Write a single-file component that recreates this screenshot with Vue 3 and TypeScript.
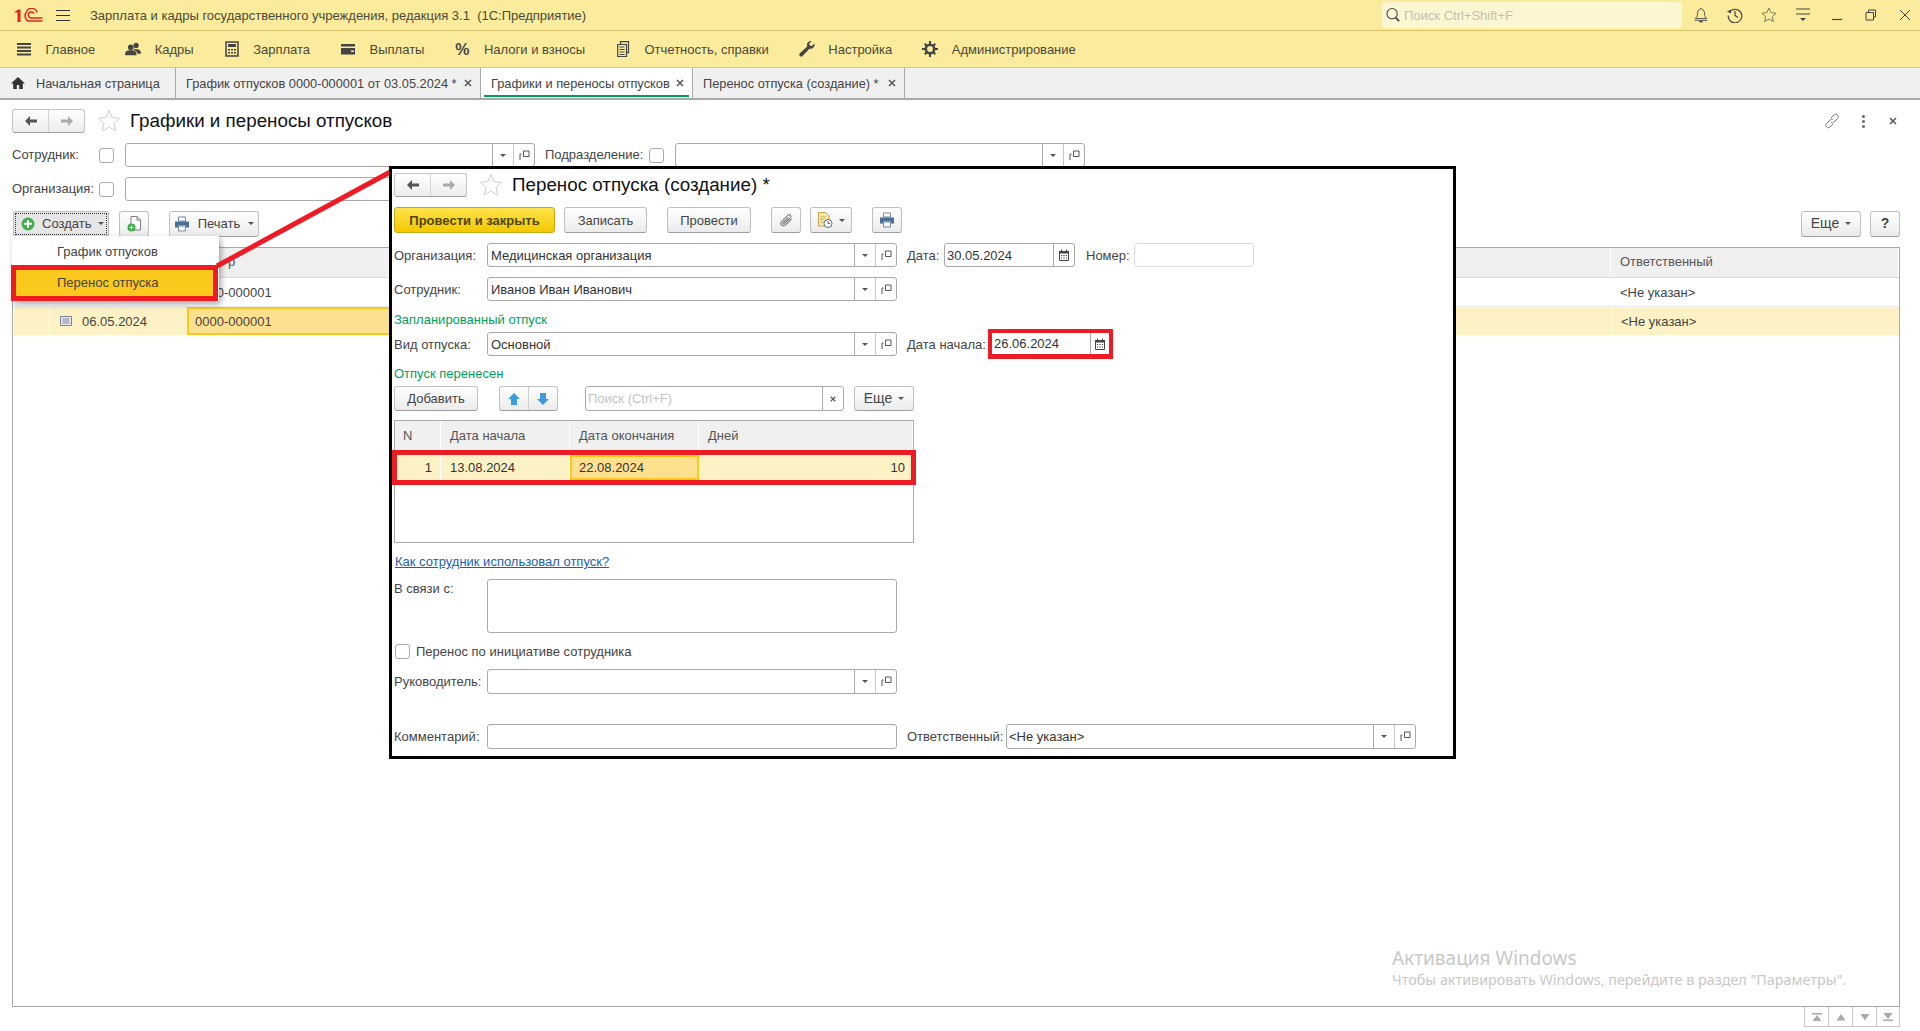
<script setup lang="ts">
// 1C form: "Графики и переносы отпусков" with the pasted "Перенос отпуска" callout on top
const menu = [
  { icon: 'i-list', label: 'Главное' },
  { icon: 'i-users', label: 'Кадры' },
  { icon: 'i-calc', label: 'Зарплата' },
  { icon: 'i-wallet', label: 'Выплаты' },
  { icon: '', label: 'Налоги и взносы' },
  { icon: 'i-docs', label: 'Отчетность, справки' },
  { icon: 'i-wrench', label: 'Настройка' },
  { icon: 'i-gear', label: 'Администрирование' },
]

const tabs = [
  { label: 'График отпусков 0000-000001 от 03.05.2024 *', width: 305 },
  { label: 'Графики и переносы отпусков', width: 212, active: true },
  { label: 'Перенос отпуска (создание) *', width: 212 },
]

const pager = ['i-first', 'i-up', 'i-down', 'i-last']
</script>

<template>
  <div class="app">
    <svg class="sprite" aria-hidden="true">
      <symbol id="i-list" viewBox="0 0 16 16"><path d="M1 2h14v2H1zM1 5.500h14v2H1zM1 9h14v2H1zM1 12.500h14v2H1z" fill="#454545" /></symbol>
      <symbol id="i-users" viewBox="0 0 18 16"><circle cx="6.500" cy="6" r="3.200" fill="#454545" /><circle cx="12.500" cy="4" r="2.900" fill="#454545" /><path d="M0 15c0-4 2-5.500 6.500-5.500S13 11 13 15zM10 7.500c1 .8 2 .8 3 .8 3 0 5 1.200 5 5h-4c-.5-2-1.500-3.500-4-4.300z" fill="#454545" /></symbol>
      <symbol id="i-calc" viewBox="0 0 14 16"><path d="M1 1h12v14H1z" fill="none" stroke="#454545" stroke-width="1.500" /><path d="M3 3h8v3H3zM3 8h2v1.500H3zM6 8h2v1.500H6zM9 8h2v1.500H9zM3 11h2v1.500H3zM6 11h2v1.500H6zM9 11h2v1.500H9z" fill="#454545" /></symbol>
      <symbol id="i-wallet" viewBox="0 0 16 16"><path d="M1 3h14v2.500H1zM1 7h14v6.500H1z" fill="#454545" /><path d="M11 9.500h3v1.500h-3z" fill="#fbeb9d" /></symbol>
      <symbol id="i-docs" viewBox="0 0 12 16"><path d="M3.500 3V.7h8v11H9.500M2 3.500h7.500v12H.7v-12z" fill="none" stroke="#454545" stroke-width="1.200" /><path d="M2.500 6h5M2.500 8.500h5M2.500 11h5M2.500 13.500h5" stroke="#454545" /></symbol>
      <symbol id="i-wrench" viewBox="0 0 16 16"><path d="M15.500 2.500 12.800 5l-2-.6-.6-2L12.800 0C10.500-.4 7.800 1.200 8 4.200c0 .5.100 1 .2 1.300L.8 12.300c-.7.800-.7 1.800 0 2.700.8.800 2 .8 2.800 0l6.800-7.300c3 .9 5.800-1.800 5.100-5.200z" fill="#454545" /></symbol>
      <symbol id="i-gear" viewBox="0 0 16 16"><circle cx="8" cy="8" r="4.200" fill="none" stroke="#454545" stroke-width="2.600" /><path d="M7 0h2v3H7zM7 13h2v3H7zM0 7h3v2H0zM13 7h3v2h-3zM2 3.400 3.400 2l2 2L4 5.400zM10.600 12 12 10.600l2 2-1.400 1.400zM2 12.600l2-2L5.400 12l-2 2zM10.600 4l2-2L14 3.400l-2 2z" fill="#454545" /></symbol>
      <symbol id="i-home" viewBox="0 0 16 16"><path d="M8 2 1 8.500h2.200V14h3.600v-4h2.400v4h3.600V8.500H15z" fill="#333" /></symbol>
      <symbol id="i-x" viewBox="0 0 8 8"><path d="m1 1 6 6M7 1 1 7" stroke="#555" stroke-width="1.500" fill="none" /></symbol>
      <symbol id="i-search" viewBox="0 0 16 18"><circle cx="7" cy="7.500" r="5.800" fill="none" stroke="#444" stroke-width="1.200" /><path d="m11 12 4 4" stroke="#444" stroke-width="2" /></symbol>
      <symbol id="i-bell" viewBox="0 0 16 18"><path d="M8 1.500c-.8 0-1 .6-1 1C4.500 3.500 4 5.500 4 8c0 2-.8 3.500-2.500 5h13C12.800 11.500 12 10 12 8c0-2.500-.5-4.500-3-5.500 0-.4-.2-1-1-1z" fill="none" stroke="#444" /><path d="M1 15h14" stroke="#444" /><path d="M6 16.500h4" stroke="#444" stroke-width="1.500" /></symbol>
      <symbol id="i-history" viewBox="0 0 16 16"><path d="M2.500 5A6.800 6.800 0 1 1 1.200 8.500" fill="none" stroke="#444" stroke-width="1.200" /><path d="M0 4.500 4 2.500v4z" fill="#444" /><path d="M8 4v4.500l3 2" fill="none" stroke="#444" stroke-width="1.200" /></symbol>
      <symbol id="i-star" viewBox="0 0 24 24"><path d="m12 1.500 3.200 7 7.300.8-5.400 5 1.500 7.500-6.600-3.800-6.600 3.800 1.500-7.500-5.400-5 7.300-.8z" fill="none" stroke="currentColor" /></symbol>
      <symbol id="i-filter" viewBox="0 0 16 16"><path d="M1 2h14M1 7h14" stroke="#444" /><path d="M5 11h6l-3 3z" fill="#444" /></symbol>
      <symbol id="i-min" viewBox="0 0 12 12"><path d="M1 10.500h10" stroke="#444" stroke-width="1.200" /></symbol>
      <symbol id="i-restore" viewBox="0 0 12 12"><path d="M3.500 3V1h7v7h-2M1 3.500h7.500v7.500H1z" fill="none" stroke="#444" /></symbol>
      <symbol id="i-close" viewBox="0 0 12 12"><path d="m1 1 10 10M11 1 1 11" stroke="#444" /></symbol>
      <symbol id="i-link" viewBox="0 0 16 16"><path d="m7 5 3-3c1-1 2.500-1 3.500 0s1 2.500 0 3.500l-3.500 3.500c-1 1-2 1-3 .3M9 11l-3 3c-1 1-2.500 1-3.500 0s-1-2.500 0-3.500L6 7c1-1 2-1 3-.3" fill="none" stroke="#777" /></symbol>
      <symbol id="i-back" viewBox="0 0 14 12"><path d="M6 1 1 6l5 5V7.500h7v-3H6z" fill="#555" /></symbol>
      <symbol id="i-fwd" viewBox="0 0 14 12"><path d="m8 1 5 5-5 5V7.500H1v-3h7z" fill="#aaa" /></symbol>
      <symbol id="i-plus" viewBox="0 0 14 14"><circle cx="7" cy="7" r="6.500" fill="#3fae49" /><path d="M3 5.800h3V3h2v2.800h3v2H8V11H6V7.800H3z" fill="#fff" /></symbol>
      <symbol id="i-docplus" viewBox="0 0 14 16"><path d="M4 .5h6l3.500 3.500v10H4z" fill="#fff" stroke="#7d7d7d" /><path d="M10 .5V4h3.500" fill="none" stroke="#7d7d7d" /><circle cx="4.500" cy="11.500" r="4" fill="#3fae49" /><path d="M2.500 11h1.500V9.500h1V11h1.500v1H5v1.500H4V12H2.500z" fill="#fff" /></symbol>
      <symbol id="i-print" viewBox="0 0 16 16"><path d="M4.500 1h7v4h-7z" fill="#fff" stroke="#6e8cab" /><path d="M1 5.500h14v6H12v-2H4v2H1z" fill="#4a7095" /><path d="M4.500 10h7v5h-7z" fill="#fff" stroke="#6e8cab" /></symbol>
      <symbol id="i-clip" viewBox="0 0 16 16"><path d="m13.500 7-5.800 5.800c-1.300 1.300-3 1.300-4 .3s-1-2.700.3-4l5.800-5.800c.9-.9 2-.9 2.700-.2s.7 1.800-.2 2.700L6.500 11.600c-.5.500-1 .5-1.300.2s-.3-.8.2-1.300L10.500 5.500" fill="none" stroke="#7d7d7d" stroke-width="1.100" /></symbol>
      <symbol id="i-doctime" viewBox="0 0 16 16"><path d="M1.500.5h7l3.500 3.500v10h-10.500z" fill="#fbe7a6" stroke="#c9a24a" /><path d="M3.500 5h5M3.500 7.500h3M3.500 10h3" stroke="#c9a24a" /><circle cx="11" cy="11.500" r="4" fill="#fff" stroke="#4a7095" /><path d="M11 9v2.500h2" fill="none" stroke="#c0392b" /></symbol>
      <symbol id="i-cal" viewBox="0 0 12 12"><path d="M1.500 2.500h9v9h-9z" fill="#fff" stroke="#444" /><path d="M1 2h10v2.500H1zM3 .5h1v2H3zM8 .5h1v2H8z" fill="#444" /><path d="M3 6h1.200v1H3zM5.400 6h1.200v1H5.400zM7.800 6H9v1H7.800zM3 8.500h1.200v1H3zM5.400 8.500h1.200v1H5.400zM7.800 8.500H9v1H7.800z" fill="#444" /></symbol>
      <symbol id="i-open" viewBox="0 0 11 11"><path d="M4.500 1h5.500v5.500H4.500z" fill="none" stroke="#555" /><path d="M2.500 4H1v6" fill="none" stroke="#555" /></symbol>
      <symbol id="i-arrup" viewBox="0 0 14 14"><path d="M7 1 1 7h3v6h6V7h3z" fill="#3d9be0" /></symbol>
      <symbol id="i-arrdn" viewBox="0 0 14 14"><path d="M7 13 1 7h3V1h6v6h3z" fill="#3d9be0" /></symbol>
      <symbol id="i-first" viewBox="0 0 10 10"><path d="M0 1h10v1.500H0zM5 3l4.500 6h-9z" fill="#aaa" /></symbol>
      <symbol id="i-up" viewBox="0 0 10 10"><path d="m5 2 4.500 6.500h-9z" fill="#aaa" /></symbol>
      <symbol id="i-down" viewBox="0 0 10 10"><path d="m5 8.500 4.500-6.500h-9z" fill="#aaa" /></symbol>
      <symbol id="i-last" viewBox="0 0 10 10"><path d="M0 7.500h10V9H0zM5 7 .5 1h9z" fill="#aaa" /></symbol>
      <symbol id="i-note" viewBox="0 0 12 10"><path d="M.5.500h11v9H.5z" fill="#e8e8ef" stroke="#7d8296" /><path d="M2.500 3h7M2.500 5h7M2.500 7h7" stroke="#7d8296" /></symbol>
    </svg>

    <header class="titlebar">
      <svg class="logo" viewBox="0 0 30 15" aria-label="1С">
        <path d="M1 4.500 5 1.500h2.500V14H4.500V4.500z" fill="#e1251b" />
        <path d="M24 4.500A5.500 5.500 0 0 0 13.500 4a6 6 0 0 0 1.500 9h14.500" fill="none" stroke="#e1251b" stroke-width="1.500" />
        <path d="M21 5.500A3 3 0 0 0 16 5a3.200 3.200 0 0 0 1.500 5h12" fill="none" stroke="#e1251b" stroke-width="1.500" />
      </svg>
      <span class="burger"><i /><i /><i /></span>
      <span class="app-title">Зарплата и кадры государственного учреждения, редакция 3.1 &nbsp;(1С:Предприятие)</span>
      <div class="search">
        <svg class="ic-16"><use href="#i-search" /></svg>
        <span>Поиск Ctrl+Shift+F</span>
      </div>
      <div class="win-icons">
        <svg class="ic-16"><use href="#i-bell" /></svg>
        <svg class="ic-16"><use href="#i-history" /></svg>
        <svg class="ic-16 star-dark"><use href="#i-star" /></svg>
        <svg class="ic-16"><use href="#i-filter" /></svg>
        <svg class="ic-12"><use href="#i-min" /></svg>
        <svg class="ic-12"><use href="#i-restore" /></svg>
        <svg class="ic-12"><use href="#i-close" /></svg>
      </div>
    </header>

    <nav class="menu">
      <div v-for="item in menu" :key="item.label" class="menu-item">
        <svg v-if="item.icon" class="ic-16"><use :href="'#' + item.icon" /></svg>
        <b v-else class="percent">%</b>
        <span>{{ item.label }}</span>
      </div>
    </nav>

    <div class="tabs">
      <div class="tab tab-home">
        <svg class="ic-16"><use href="#i-home" /></svg>
        <span>Начальная страница</span>
      </div>
      <div
        v-for="tab in tabs"
        :key="tab.label"
        class="tab"
        :class="{ active: tab.active }"
        :style="{ width: tab.width + 'px' }"
      >
        <span>{{ tab.label }}</span>
        <svg class="ic-8"><use href="#i-x" /></svg>
      </div>
    </div>

    <main class="form">
      <div class="head">
        <div class="nav-btns">
          <button class="nav-btn"><svg class="ic-arrow"><use href="#i-back" /></svg></button>
          <button class="nav-btn"><svg class="ic-arrow"><use href="#i-fwd" /></svg></button>
        </div>
        <svg class="fav"><use href="#i-star" /></svg>
        <h1>Графики и переносы отпусков</h1>
        <div class="head-tools">
          <svg class="ic-16"><use href="#i-link" /></svg>
          <span class="dots"><i /><i /><i /></span>
          <svg class="ic-8 head-x"><use href="#i-x" /></svg>
        </div>
      </div>

      <div class="filter">
        <label class="filter-label">Сотрудник:</label>
        <span class="check" />
        <div class="field filter-field">
          <span class="field-text" />
          <span class="field-btn"><i class="caret" /></span>
          <span class="field-btn"><svg class="ic-open"><use href="#i-open" /></svg></span>
        </div>
        <label class="filter-label second">Подразделение:</label>
        <span class="check" />
        <div class="field filter-field">
          <span class="field-text" />
          <span class="field-btn"><i class="caret" /></span>
          <span class="field-btn"><svg class="ic-open"><use href="#i-open" /></svg></span>
        </div>
      </div>

      <div class="filter">
        <label class="filter-label">Организация:</label>
        <span class="check" />
        <div class="field filter-field">
          <span class="field-text" />
          <span class="field-btn"><i class="caret" /></span>
          <span class="field-btn"><svg class="ic-open"><use href="#i-open" /></svg></span>
        </div>
      </div>

      <div class="toolbar">
        <button class="btn btn-create">
          <span class="focus-ring">
            <svg class="ic-14"><use href="#i-plus" /></svg>
            Создать
            <i class="caret" />
          </span>
        </button>
        <button class="btn btn-doc"><svg class="ic-16"><use href="#i-docplus" /></svg></button>
        <button class="btn btn-print">
          <svg class="ic-16"><use href="#i-print" /></svg>
          Печать
          <i class="caret" />
        </button>
        <button class="btn btn-more">Еще <i class="caret" /></button>
        <button class="btn btn-help">?</button>
      </div>

      <div class="list">
        <div class="list-row list-head">
          <span />
          <span />
          <span class="col-number">р</span>
          <span />
          <span>Ответственный</span>
        </div>
        <div class="list-row">
          <span />
          <span />
          <span>0000-000001</span>
          <span />
          <span>&lt;Не указан&gt;</span>
        </div>
        <div class="list-row selected">
          <span />
          <span class="date-cell"><svg class="ic-note"><use href="#i-note" /></svg>06.05.2024</span>
          <span class="cell-current">0000-000001</span>
          <span />
          <span>&lt;Не указан&gt;</span>
        </div>
      </div>

      <div class="pager">
        <button v-for="icon in pager" :key="icon"><svg class="ic-10"><use :href="'#' + icon" /></svg></button>
      </div>
    </main>

    <!-- dropdown of the "Создать" button -->
    <div class="dropdown">
      <div class="dropdown-item">График отпусков</div>
      <div class="dropdown-item marked">Перенос отпуска</div>
    </div>

    <svg class="callout-line" viewBox="0 0 180 100">
      <path d="M3 98 178 3" stroke="#ed1c24" stroke-width="5" />
    </svg>

    <!-- pasted "Перенос отпуска" form -->
    <section class="doc">
      <div class="doc-head">
        <div class="nav-btns">
          <button class="nav-btn"><svg class="ic-arrow"><use href="#i-back" /></svg></button>
          <button class="nav-btn"><svg class="ic-arrow"><use href="#i-fwd" /></svg></button>
        </div>
        <svg class="fav"><use href="#i-star" /></svg>
        <h2>Перенос отпуска (создание) *</h2>
      </div>

      <div class="doc-tools">
        <button class="btn btn-primary">Провести и закрыть</button>
        <button class="btn btn-save">Записать</button>
        <button class="btn btn-post">Провести</button>
        <button class="btn btn-clip"><svg class="ic-16"><use href="#i-clip" /></svg></button>
        <button class="btn btn-task"><svg class="ic-16"><use href="#i-doctime" /></svg><i class="caret" /></button>
        <button class="btn btn-print2"><svg class="ic-16"><use href="#i-print" /></svg></button>
      </div>

      <div class="row first-row">
        <label class="row-label">Организация:</label>
        <div class="field wide">
          <span class="field-text">Медицинская организация</span>
          <span class="field-btn"><i class="caret" /></span>
          <span class="field-btn"><svg class="ic-open"><use href="#i-open" /></svg></span>
        </div>
        <label class="date-label">Дата:</label>
        <div class="field date-field">
          <span class="field-text">30.05.2024</span>
          <span class="field-btn"><svg class="ic-12"><use href="#i-cal" /></svg></span>
        </div>
        <label class="num-label">Номер:</label>
        <div class="field num-field"><span class="field-text" /></div>
      </div>

      <div class="row">
        <label class="row-label">Сотрудник:</label>
        <div class="field wide">
          <span class="field-text">Иванов Иван Иванович</span>
          <span class="field-btn"><i class="caret" /></span>
          <span class="field-btn"><svg class="ic-open"><use href="#i-open" /></svg></span>
        </div>
      </div>

      <div class="group-title planned">Запланированный отпуск</div>
      <div class="row kind-row">
        <label class="row-label">Вид отпуска:</label>
        <div class="field wide">
          <span class="field-text">Основной</span>
          <span class="field-btn"><i class="caret" /></span>
          <span class="field-btn"><svg class="ic-open"><use href="#i-open" /></svg></span>
        </div>
        <label class="start-label">Дата начала:</label>
        <div class="field start-field">
          <span class="field-text">26.06.2024</span>
          <span class="field-btn"><svg class="ic-12"><use href="#i-cal" /></svg></span>
        </div>
      </div>

      <div class="group-title moved">Отпуск перенесен</div>
      <div class="grid-tools">
        <button class="btn btn-add">Добавить</button>
        <div class="btn arrows">
          <span><svg class="ic-14"><use href="#i-arrup" /></svg></span>
          <span><svg class="ic-14"><use href="#i-arrdn" /></svg></span>
        </div>
        <div class="field grid-search">
          <span class="field-text hint">Поиск (Ctrl+F)</span>
          <span class="field-btn"><svg class="ic-x-small"><use href="#i-x" /></svg></span>
        </div>
        <button class="btn btn-more2">Еще <i class="caret" /></button>
      </div>

      <div class="grid">
        <div class="grid-head">
          <span>N</span>
          <span>Дата начала</span>
          <span>Дата окончания</span>
          <span>Дней</span>
        </div>
        <div class="grid-row">
          <span class="num">1</span>
          <span>13.08.2024</span>
          <span class="cell-current">22.08.2024</span>
          <span class="num">10</span>
        </div>
      </div>

      <a class="link">Как сотрудник использовал отпуск?</a>

      <div class="row reason-row">
        <label class="row-label reason-label">В связи с:</label>
        <div class="field wide reason" />
      </div>

      <div class="own-row">
        <span class="check" />
        <span>Перенос по инициативе сотрудника</span>
      </div>

      <div class="row boss-row">
        <label class="row-label">Руководитель:</label>
        <div class="field wide">
          <span class="field-text" />
          <span class="field-btn"><i class="caret" /></span>
          <span class="field-btn"><svg class="ic-open"><use href="#i-open" /></svg></span>
        </div>
      </div>

      <div class="row comment-row">
        <label class="row-label">Комментарий:</label>
        <div class="field wide"><span class="field-text" /></div>
        <label class="owner-label">Ответственный:</label>
        <div class="field owner-field">
          <span class="field-text">&lt;Не указан&gt;</span>
          <span class="field-btn"><i class="caret" /></span>
          <span class="field-btn"><svg class="ic-open"><use href="#i-open" /></svg></span>
        </div>
      </div>
    </section>

    <div class="activation">
      <div class="activation-title">Активация Windows</div>
      <div>Чтобы активировать Windows, перейдите в раздел "Параметры".</div>
    </div>
  </div>
</template>

<style scoped>
.app {
  position: relative;
  width: 1920px;
  height: 1031px;
  overflow: hidden;
  display: flex;
  flex-direction: column;
  background: #fff;
  color: #444;
  font: 13px/15px "Liberation Sans", Arial, sans-serif;
}
.sprite { position: absolute; width: 0; height: 0; }
svg { display: block; flex: none; }
button { font: inherit; color: inherit; padding: 0; }

.ic-16 { width: 16px; height: 16px; }
.ic-14 { width: 14px; height: 14px; }
.ic-12 { width: 12px; height: 12px; }
.ic-10 { width: 10px; height: 10px; }
.ic-8 { width: 8px; height: 8px; }
.ic-open { width: 11px; height: 11px; }
.ic-arrow { width: 14px; height: 12px; }
.ic-note { width: 12px; height: 10px; margin-right: 10px; }
.ic-x-small { width: 6px; height: 6px; }

.titlebar {
  height: 30px;
  flex: none;
  display: flex;
  align-items: center;
  background: #fbeb9d;
  border-bottom: 1px solid #d6c26b;
  box-sizing: content-box;
}
.logo { width: 30px; height: 15px; margin-left: 13px; }
.burger { width: 14px; margin-left: 13px; display: flex; flex-direction: column; gap: 4px; }
.burger i { height: 1px; background: #333; }
.app-title { margin-left: 20px; color: #4a4a3a; }
.search {
  margin-left: auto;
  width: 300px;
  height: 26px;
  box-sizing: border-box;
  padding-left: 3px;
  display: flex;
  align-items: center;
  gap: 3px;
  background: #fdf6d2;
  border-radius: 3px;
  color: #c4c0b0;
}
.win-icons {
  margin: 0 -2px 0 2px;
  display: grid;
  grid-auto-flow: column;
  grid-auto-columns: 34px;
  justify-items: center;
  align-items: center;
}
.star-dark { color: #444; }

.menu {
  height: 36px;
  flex: none;
  display: flex;
  align-items: center;
  gap: 30px;
  padding-left: 16px;
  background: #fbeb9d;
  border-bottom: 1px solid #cfc79a;
}
.menu-item { display: flex; align-items: center; gap: 13.500px; color: #4a4a3a; }
.percent { width: 16px; font-size: 16px; color: #454545; text-align: center; }

.tabs {
  height: 30px;
  flex: none;
  display: flex;
  background: #f0f0f0;
  border-bottom: 2px solid #a9a9a9;
  font-size: 12.800px;
}
.tab {
  position: relative;
  box-sizing: border-box;
  display: flex;
  align-items: center;
  justify-content: space-between;
  padding: 0 8px 0 10px;
  border-right: 1px solid #a9a9a9;
  white-space: nowrap;
  margin-right: 0;
}
.tab-home { width: 176px; gap: 10px; justify-content: flex-start; }
.tab.active { background: #fff; }
.tab.active::after {
  content: "";
  position: absolute;
  left: 3px;
  right: 3px;
  bottom: 1px;
  height: 2px;
  background: #00a05a;
}

.form {
  flex: 1;
  min-height: 0;
  display: flex;
  flex-direction: column;
  padding: 9px 20px 4px 12px;
}
.head { height: 24px; display: flex; align-items: center; flex: none; }
.nav-btns {
  width: 73px;
  height: 24px;
  box-sizing: border-box;
  display: flex;
  border: 1px solid #c4c4c4;
  border-bottom-color: #a0a0a0;
  border-radius: 3px;
  background: linear-gradient(#fff, #ececec);
}
.nav-btn {
  flex: 1;
  display: flex;
  align-items: center;
  justify-content: center;
  border: 0;
  background: none;
}
.nav-btn + .nav-btn { border-left: 1px solid #d4d4d4; }
.fav { width: 24px; height: 24px; margin-left: 12px; color: #cfcfcf; }
h1, h2 { margin: 0; font-size: 18.800px; font-weight: 400; line-height: 24px; color: #111; }
h1 { margin-left: 9px; }
h2 { margin-left: 9px; }
.head-tools { margin-left: auto; display: flex; align-items: center; }
.dots { margin-left: 22px; display: flex; flex-direction: column; gap: 2px; }
.dots i { width: 3px; height: 3px; border-radius: 50%; background: #666; }
.head-x { margin-left: 24px; margin-right: 3px; }

.filter { height: 24px; margin-top: 10px; display: flex; align-items: center; flex: none; }
.filter-label { width: 87px; padding-bottom: 2px; }
.filter-label.second { width: 104px; margin-left: 10px; }
.filter-field { width: 410px; margin-left: 11px; }

.check {
  width: 15px;
  height: 15px;
  flex: none;
  box-sizing: border-box;
  border: 1px solid #a9a9a9;
  border-radius: 3px;
  background: #fff;
}

.field {
  height: 100%;
  box-sizing: border-box;
  display: flex;
  flex: none;
  border: 1px solid #a9a9a9;
  border-radius: 3px;
  background: #fff;
  color: #333;
}
.field-text { flex: 1; padding-left: 2px; align-self: center; white-space: nowrap; }
.wide .field-text { padding-left: 3px; }
.field-btn {
  width: 21px;
  box-sizing: border-box;
  flex: none;
  border-left: 1px solid #a9a9a9;
  display: flex;
  align-items: center;
  justify-content: center;
}
.field-btn + .field-btn { border-left-color: #c8c8c8; }
.caret {
  width: 0;
  height: 0;
  display: inline-block;
  flex: none;
  border: 3px solid transparent;
  border-top: 3px solid #555;
  border-bottom: 0;
}

.toolbar { height: 26px; margin-top: 10px; display: flex; align-items: stretch; flex: none; }
.btn {
  box-sizing: border-box;
  flex: none;
  display: flex;
  align-items: center;
  justify-content: center;
  border: 1px solid #c0c0c0;
  border-bottom-color: #9d9d9d;
  border-radius: 3px;
  background: linear-gradient(#fff, #ebebeb);
  color: #444;
}
.toolbar .btn { padding-bottom: 1px; }
.btn-create { width: 96px; margin-left: 1px; background: #e6e6e6; }
.toolbar .btn-create { padding: 1px; }
.focus-ring {
  flex: 1;
  align-self: stretch;
  display: flex;
  align-items: center;
  gap: 7px;
  padding: 0 0 1px 5px;
  border: 1px dotted #333;
}
.btn-doc { width: 30px; margin-left: 10px; }
.btn-print { width: 90px; margin-left: 20px; gap: 8px; }
.btn-more { width: 60px; margin-left: auto; gap: 6px; font-size: 14px; }
.btn-help { width: 30px; margin-left: 9px; font-size: 14px; font-weight: 700; }

.list {
  flex: 1;
  margin-top: 10px;
  min-height: 0;
  box-sizing: border-box;
  border: 1px solid #a9a9a9;
}
.list-row {
  height: 29px;
  display: grid;
  grid-template-columns: 36px 138px 213px 1211px 1fr;
  align-items: center;
  border-bottom: 1px solid #ececec;
  box-sizing: border-box;
}
.list-row > span { padding-left: 8px; height: 100%; display: flex; align-items: center; box-sizing: border-box; white-space: nowrap; }
.list-row > span:last-child { padding-left: 9px; }
.list-head { height: 30px; background: #f0f0f0; border-bottom-color: #d9d9d9; color: #555; }
.list-head > span { border-right: 1px solid #fff; padding-bottom: 2px; }
.list-row > .col-number { padding-left: 41px; }
.list-row > .date-cell { padding-left: 10px; }
.selected { background: #fdf2c5; border-bottom-color: #fff; }
.selected > span { border-left: 1px solid #fff; }
.cell-current { background: #fee08f; border: 2px solid #fbc91b !important; }
.list-row > .cell-current { padding-left: 6px; }

.pager { height: 20px; display: flex; justify-content: flex-end; flex: none; }
.pager button {
  width: 24px;
  display: flex;
  align-items: center;
  justify-content: center;
  box-sizing: border-box;
  border: 1px solid #c8c8c8;
  border-top: 0;
  border-right-width: 0;
  background: #fff;
}
.pager button:last-child { border-right-width: 1px; }

.dropdown {
  position: absolute;
  left: 12px;
  top: 236px;
  width: 207px;
  box-shadow: 2px 3px 6px rgba(0, 0, 0, 0.35);
  background: #fff;
}
.dropdown-item { height: 29px; padding: 2px 0 0 45px; display: flex; align-items: center; box-sizing: border-box; }
.dropdown-item.marked {
  height: 36px;
  margin-left: -1px;
  width: 207px;
  padding: 0 0 1px 41px;
  background: #fbc91b;
  border: 5px solid #ed1c24;
}

.callout-line { position: absolute; left: 214px; top: 168px; width: 180px; height: 100px; }

.doc {
  position: absolute;
  left: 389px;
  top: 166px;
  width: 1067px;
  height: 593px;
  box-sizing: border-box;
  padding: 4px 0 0 2px;
  background: #fff;
  border: 3px solid #000;
  display: flex;
  flex-direction: column;
}
.doc-head { height: 24px; display: flex; align-items: center; flex: none; }
.doc-tools { height: 26px; margin-top: 10px; display: flex; align-items: stretch; flex: none; }
.btn-primary {
  width: 161px;
  font-weight: 700;
  color: #4f4500;
  background: linear-gradient(#fde24a, #f4c800);
  border-color: #c8a810;
}
.btn-save { width: 83px; margin-left: 9px; }
.btn-post { width: 84px; margin-left: 20px; }
.btn-clip { width: 30px; margin-left: 20px; }
.btn-task { width: 42px; margin-left: 9px; gap: 6px; }
.btn-print2 { width: 30px; margin-left: 20px; }

.row { height: 24px; margin-top: 10px; display: flex; align-items: center; flex: none; }
.row-label { width: 93px; flex: none; }
.wide { width: 410px; }
.date-label { width: 37px; margin-left: 10px; }
.date-field { width: 131px; }
.num-label { width: 48px; margin-left: 11px; }
.num-field { width: 120px; border-color: #dcdcdc; }
.start-label { width: 81px; margin-left: 10px; }
.start-field {
  width: 125px;
  height: 30px;
  border: 4px solid #ed1c24;
  border-bottom-width: 5px;
  border-radius: 0;
}
.start-field .field-btn { width: 19px; }
.group-title { height: 15px; flex: none; color: #00a05a; }
.planned { margin-top: 11px; }
.kind-row { margin-top: 5px; }
.moved { margin-top: 10px; }

.grid-tools { height: 25px; margin-top: 5px; display: flex; align-items: stretch; flex: none; }
.btn-add { width: 84px; }
.arrows { width: 59px; margin-left: 21px; }
.arrows span { flex: 1; align-self: stretch; display: flex; align-items: center; justify-content: center; }
.arrows span + span { border-left: 1px solid #d0d0d0; }
.grid-search { width: 259px; margin-left: 27px; }
.hint { color: #c4c4c4; }
.btn-more2 { width: 60px; margin-left: 10px; gap: 6px; font-size: 14px; }

.grid {
  height: 123px;
  width: 520px;
  margin-top: 9px;
  flex: none;
  box-sizing: border-box;
  border: 1px solid #a9a9a9;
}
.grid-head {
  height: 29px;
  display: grid;
  grid-template-columns: 46px 129px 129px 1fr;
  align-items: stretch;
  background: #f0f0f0;
  color: #555;
}
.grid-head span { display: flex; align-items: center; padding-left: 9px; border-right: 1px solid #fff; }
.grid-head span:first-child { padding-left: 8px; }
.grid-row {
  height: 35px;
  margin: 0 -3px;
  box-sizing: border-box;
  display: grid;
  grid-template-columns: 44px 129px 129px 1fr;
  align-items: stretch;
  background: #fdf2c5;
  border: 5px solid #ed1c24;
  color: #333;
}
.grid-row span { display: flex; align-items: center; padding-left: 9px; border-right: 1px solid #fff; }
.grid-row .cell-current { padding-left: 7px; }
.grid-row .num { justify-content: flex-end; padding: 0 8px 0 0; border-right: 0; }
.grid-row .num:last-child { padding-right: 6px; }
.grid-row span:first-child { border-right: 1px solid #fff; }

.link { height: 15px; margin-top: 11px; flex: none; padding-left: 1px; color: #1b5fae; text-decoration: underline; }
.reason-row { height: 54px; align-items: flex-start; }
.reason-label { margin-top: 2px; }
.reason { height: 54px; }
.own-row { height: 15px; margin-top: 11px; padding-left: 1px; display: flex; align-items: center; gap: 6px; flex: none; }
.boss-row { height: 25px; }
.comment-row { height: 25px; margin-top: 30px; }
.owner-label { width: 99px; margin-left: 10px; }
.owner-field { width: 410px; }

.activation {
  position: absolute;
  left: 1392px;
  top: 946px;
  font: 14.350px/18px "Noto Sans", sans-serif;
  color: #c8c8c8;
  pointer-events: none;
}
.activation-title { font-size: 19px; line-height: 24px; margin-bottom: 1px; }
</style>
